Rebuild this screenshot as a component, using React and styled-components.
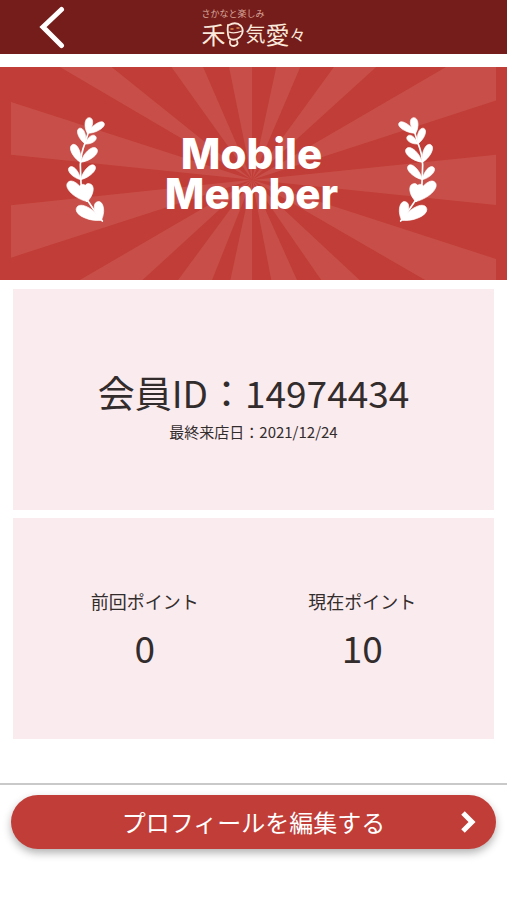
import React from 'react'
import styled, { createGlobalStyle } from 'styled-components'


//STYLING
const GlobalStyle = createGlobalStyle`
*, *::before, *::after {
  box-sizing: border-box;
}
body {
  margin: 0;
  background-color: white;
  color: #332c2d;
  font-family: "Noto Sans CJK JP", "Noto Sans", sans-serif;
}
`
const Page = styled.div`
display: flex;
flex-direction: column;
`
const Header = styled.header`
display: grid;
grid-template-columns: 1fr auto 1fr;
align-items: center;
height: 54px;
padding: 0px 38px;
background-color: #751d1a;
`
const BackButton = styled.button`
display: flex;
justify-self: start;
padding: 0px;
border: none;
background: none;
cursor: pointer;
`
const Logo = styled.h1`
margin: 0px;
color: #fbe9dc;
font-weight: 400;
`
const LogoTagline = styled.span`
display: block;
color: #d9a79b;
font-size: 9px;
font-weight: 400;
line-height: 14px;
`
const LogoName = styled.span`
display: flex;
align-items: center;
line-height: 26px;
`
const LogoLetter = styled.span`
font-size: ${props => props.$size}px;
`
const Banner = styled.section`
position: relative;
display: flex;
justify-content: space-between;
align-items: center;
margin-top: 13px;
padding: 50px 70px 57px 66px;
background-color: #c13d37;
`
const Rays = styled.svg`
position: absolute;
top: 0;
left: 11px;
width: calc(100% - 22px);
height: 100%;
`
const Laurel = styled.svg`
position: relative;
width: 38px;
height: 106px;
overflow: visible;
transform: ${props => props.$mirrored ? 'scaleX(-1)' : 'none'};
`
const BannerTitle = styled.h2`
position: relative;
margin: 0px;
padding-top: 8px;
color: white;
font-family: Inter, "Liberation Sans", sans-serif;
font-size: 42px;
font-weight: 800;
line-height: 40px;
text-align: center;
`
const Cards = styled.main`
display: flex;
flex-direction: column;
gap: 8px;
padding: 9px 13px 44px;
`
const Card = styled.section`
display: flex;
flex-direction: column;
justify-content: center;
align-items: center;
gap: 4px;
min-height: 221px;
padding-top: 12px;
background-color: #faebee;
`
const PointsCard = styled.dl`
display: grid;
grid-template-columns: 1fr 1fr;
align-items: center;
min-height: 221px;
margin: 0px;
padding: 2px 23px 0px;
background-color: #faebee;
`
const PointItem = styled.div`
display: flex;
flex-direction: column;
align-items: center;
gap: 10px;
`
const PointLabel = styled.dt`
font-size: 18px;
line-height: 24px;
`
const PointValue = styled.dd`
margin: 0px;
font-size: 37px;
line-height: 48px;
`
const MemberId = styled.p`
margin: 0px;
font-size: 37px;
line-height: 48px;
`
const LastVisit = styled.p`
margin: 0px;
font-size: 15px;
line-height: 24px;
`
const Footer = styled.footer`
padding: 10px 11px 20px;
border-top: 2px solid #c9c9c9;
`
const EditButton = styled.button`
display: grid;
grid-template-columns: 1fr auto 1fr;
align-items: center;
width: 100%;
height: 54px;
padding: 0px 20px;
border: none;
border-radius: 27px;
background-color: #c13d37;
box-shadow: rgba(0, 0, 0, 0.3) 0px 4px 8px;
color: white;
font-family: inherit;
font-size: 24px;
line-height: 32px;
cursor: pointer;
`
const ArrowIcon = styled.svg`
grid-column: 3;
justify-self: end;
`

//Rays of the banner, all of them end in the centre point
const rays = [
  '180,22 335,22', '515,22 610,22', '688,22 757,22', '830,22 902,22', '1003,22 1130,22',
  '1340,22 1490,22 1490,122', '1490,285 1490,435', '1490,597 1490,660 1277,660',
  '1080,660 965,660', '892,660 815,660', '757,660 692,660', '637,660 535,660', '428,660 240,660',
  '33,593 33,436', '33,285 33,127'
]

//Leaves as [base x, base y, tip x, tip y, width]
const leaves = [
  [112, 85, 119, 38, 15], [112, 85, 162, 54, 14],
  [106, 117, 88, 70, 14], [106, 117, 137, 94, 13],
  [92, 172, 67, 119, 16], [92, 172, 140, 131, 17],
  [92, 224, 58, 187, 14], [92, 224, 134, 182, 15],
  [114, 290, 54, 232, 22], [110, 291, 118, 236, 19], [100, 285, 98, 238, 15],
  [154, 346, 80, 308, 22], [154, 346, 143, 290, 18]
]

const leafPath = ([bx, by, tx, ty, width]) => {
  const dx = tx - bx
  const dy = ty - by
  const length = Math.hypot(dx, dy)
  const nx = -dy / length * width
  const ny = dx / length * width
  const mx = bx + dx * 0.4
  const my = by + dy * 0.4
  return `M${bx},${by} C${mx + nx},${my + ny} ${tx + nx},${ty + ny} ${tx},${ty} C${tx - nx},${ty - ny} ${mx - nx},${my - ny} ${bx},${by}Z`
}

const LaurelBranch = ({ mirrored }) =>
  <Laurel $mirrored={mirrored} viewBox="48 36 114 318" aria-hidden="true">
    {leaves.map((e, i) =>
      <path key={i} d={leafPath(e)} fill="white" stroke="white" strokeWidth="2" strokeLinejoin="round" />
    )}
    <path
      d="M118,72 L106,112 Q92,146 91,180 L93,235 Q94,270 112,285 L130,312 L157,348"
      fill="none"
      stroke="white"
      strokeWidth="5"
      strokeLinecap="round"
    />
  </Laurel>

const points = [
  { label: '前回ポイント', value: 0 },
  { label: '現在ポイント', value: 10 }
]


const App = () => {
  return <Page>
    <GlobalStyle />
    <Header>
      <BackButton aria-label="戻る">
        <svg width="28" height="44" viewBox="0 0 28 44">
          <path d="M23.500 4.500L5 22L23.500 40.500" fill="none" stroke="white" strokeWidth="5" strokeLinecap="round" />
        </svg>
      </BackButton>
      <Logo>
        <LogoTagline>さかなと楽しみ</LogoTagline>
        <LogoName aria-label="和気愛々">
          <LogoLetter $size={24}>禾</LogoLetter>
          <svg width="20" height="26" viewBox="0 0 20 26" fill="none" stroke="#fbe9dc" strokeLinecap="round">
            <path d="M3 4Q2 12 4 17Q9 21 15 16Q20 10 16 5Q11 0 4 4" strokeWidth="1.800" />
            <path d="M4 11Q9 13 17 10" strokeWidth="1.200" />
            <path d="M6 8h2M12 7h2" stroke="#e08a4c" strokeWidth="1.500" />
            <path d="M5 20Q4 25 9 25Q14 24 12 20" strokeWidth="1.800" />
          </svg>
          <LogoLetter $size={20}>気</LogoLetter>
          <LogoLetter $size={24}>愛</LogoLetter>
          <LogoLetter $size={16}>々</LogoLetter>
        </LogoName>
      </Logo>
    </Header>

    <Banner>
      <Rays viewBox="33 22 1457 638" preserveAspectRatio="none" aria-hidden="true">
        {rays.map(e => <polygon key={e} points={`757,360 ${e}`} fill="#c84f49" />)}
      </Rays>
      <LaurelBranch />
      <BannerTitle>Mobile<br />Member</BannerTitle>
      <LaurelBranch mirrored />
    </Banner>

    <Cards>
      <Card>
        <MemberId>会員ID：14974434</MemberId>
        <LastVisit>最終来店日：2021/12/24</LastVisit>
      </Card>
      <PointsCard>
        {points.map(e =>
          <PointItem key={e.label}>
            <PointLabel>{e.label}</PointLabel>
            <PointValue>{e.value}</PointValue>
          </PointItem>
        )}
      </PointsCard>
    </Cards>

    <Footer>
      <EditButton>
        <span />
        <span>プロフィールを編集する</span>
        <ArrowIcon width="16" height="24" viewBox="0 0 16 24" aria-hidden="true">
          <path d="M3 3L12 12L3 21" fill="none" stroke="white" strokeWidth="5" />
        </ArrowIcon>
      </EditButton>
    </Footer>
  </Page>
}

export default App
